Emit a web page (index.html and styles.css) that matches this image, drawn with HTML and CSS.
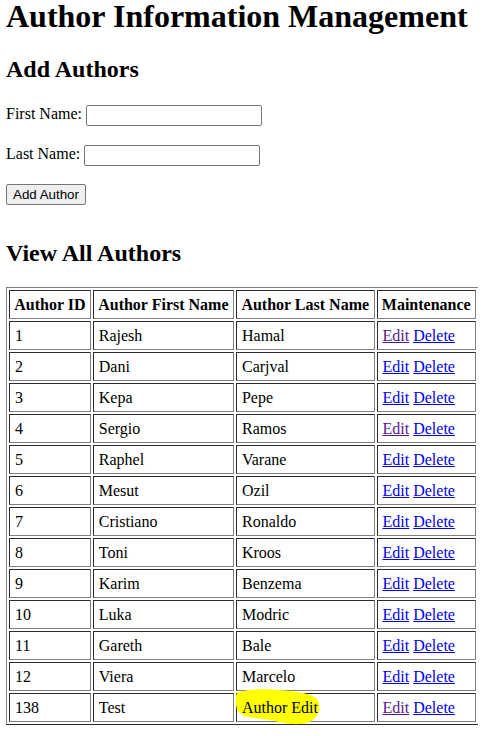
FILE: index.html
```html
<!DOCTYPE html>
<html>
<head>
<meta charset="utf-8">
<title>Author Information Management</title>
<link rel="stylesheet" href="styles.css">
</head>
<body>
<h1>Author Information Management</h1>
<h2 class="add-title">Add Authors</h2>
<form class="add-form">
  <p>First Name: <input type="text" class="field"></p>
  <p>Last Name: <input type="text" class="field"></p>
  <p><button type="button" class="btn">Add Author</button></p>
</form>
<h2>View All Authors</h2>
<table class="authors">
  <tr><th>Author ID</th><th>Author First Name</th><th>Author Last Name</th><th>Maintenance</th></tr>
  <tr><td>1</td><td>Rajesh</td><td>Hamal</td><td><a href="#" class="visited">Edit</a> <a href="#">Delete</a></td></tr>
  <tr><td>2</td><td>Dani</td><td>Carjval</td><td><a href="#">Edit</a> <a href="#">Delete</a></td></tr>
  <tr><td>3</td><td>Kepa</td><td>Pepe</td><td><a href="#">Edit</a> <a href="#">Delete</a></td></tr>
  <tr><td>4</td><td>Sergio</td><td>Ramos</td><td><a href="#" class="visited">Edit</a> <a href="#">Delete</a></td></tr>
  <tr><td>5</td><td>Raphel</td><td>Varane</td><td><a href="#">Edit</a> <a href="#">Delete</a></td></tr>
  <tr><td>6</td><td>Mesut</td><td>Ozil</td><td><a href="#">Edit</a> <a href="#">Delete</a></td></tr>
  <tr><td>7</td><td>Cristiano</td><td>Ronaldo</td><td><a href="#">Edit</a> <a href="#">Delete</a></td></tr>
  <tr><td>8</td><td>Toni</td><td>Kroos</td><td><a href="#">Edit</a> <a href="#">Delete</a></td></tr>
  <tr><td>9</td><td>Karim</td><td>Benzema</td><td><a href="#">Edit</a> <a href="#">Delete</a></td></tr>
  <tr><td>10</td><td>Luka</td><td>Modric</td><td><a href="#">Edit</a> <a href="#">Delete</a></td></tr>
  <tr><td>11</td><td>Gareth</td><td>Bale</td><td><a href="#">Edit</a> <a href="#">Delete</a></td></tr>
  <tr><td>12</td><td>Viera</td><td>Marcelo</td><td><a href="#">Edit</a> <a href="#">Delete</a></td></tr>
  <tr><td>138</td><td>Test</td><td class="marked"><svg class="highlight" width="88" height="36" viewBox="0 0 88 36"><path d="M2 4 C10 0 30 -1 55 2 C70 4 82 6 84 14 C86 24 80 34 66 35 C50 36 40 31 28 30 C18 29 6 28 3 22 C0 16 0 8 2 4 Z" fill="#ffff00"/></svg><span class="marked-text">Author Edit</span></td><td><a href="#" class="visited">Edit</a> <a href="#">Delete</a></td></tr>
</table>
</body>
</html>
```
FILE: styles.css
```css
html, body {
  background: #ffffff;
}
body {
  margin: 0 6px;
  font-family: "Liberation Serif", "Times New Roman", serif;
  font-size: 16px;
  color: #000000;
}
h1 {
  font-size: 32px;
  line-height: 32px;
  margin: 0 0 24px;
  white-space: nowrap;
}
h2 {
  font-size: 24px;
  margin: 19.92px 0;
}
.add-title {
  margin-bottom: 19px;
}
p {
  margin: 16px 0;
  line-height: 23px;
}
.add-form {
  margin: 0 0 35px;
}
.field {
  font-family: "Liberation Sans", Arial, sans-serif;
  font-size: 13.33px;
  width: 170px;
  height: 17px;
  padding: 1px 2px;
  border: 1px solid #767676;
  border-radius: 2px;
  vertical-align: middle;
  box-sizing: content-box;
}
.btn {
  font-family: "Liberation Sans", Arial, sans-serif;
  font-size: 13.33px;
  height: 21px;
  padding: 1px 6px;
  background: #efefef;
  border: 1px solid #767676;
  border-radius: 2px;
  color: #000;
  vertical-align: middle;
}
.authors {
  border: 1px outset #808080;
  border-spacing: 2px;
  margin: 0;
  width: 473px;
}
.authors th,
.authors td {
  border: 1px inset #808080;
  padding: 5px;
  line-height: 17px;
  text-align: left;
  white-space: nowrap;
}
.authors th {
  text-align: center;
  padding: 5px 4px;
}
a {
  color: #0000ee;
  text-decoration: underline;
}
a.visited {
  color: #551a8b;
}
.marked {
  position: relative;
}
.highlight {
  position: absolute;
  left: -2px;
  top: -5px;
  z-index: 0;
}
.marked-text {
  position: relative;
  z-index: 1;
}
```
